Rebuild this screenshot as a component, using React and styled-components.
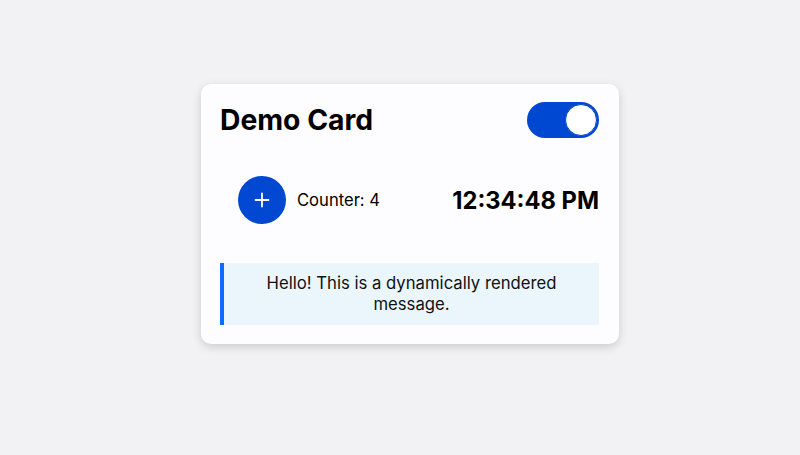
import React, { useState } from 'react';
import styled, { createGlobalStyle } from 'styled-components';

const GlobalStyle = createGlobalStyle`
  html, body {
    margin: 0;
    padding: 0;
    background: #f2f1f4;
    font-family: Inter, "Noto Sans", sans-serif;
  }
`;

const Page = styled.div`
  width: 800px;
  height: 455px;
  display: flex;
  justify-content: center;
  padding: 84px 0 0 20px;
  box-sizing: border-box;
`;

const Card = styled.div`
  width: 418px;
  height: 260px;
  box-sizing: border-box;
  background: #fdfcff;
  border-radius: 10px;
  padding: 18px 20px 19px 19px;
  box-shadow: 0 3px 10px rgba(0, 0, 0, 0.16);
`;

const Header = styled.div`
  display: flex;
  align-items: center;
  justify-content: space-between;
  height: 36px;
`;

const Title = styled.h1`
  margin: 0;
  font-size: 28.3px;
  font-weight: 700;
  color: #000;
`;

const Toggle = styled.button`
  width: 72px;
  height: 36px;
  border-radius: 18px;
  border: none;
  padding: 0 2px;
  background: ${p => (p.$on ? '#0047d1' : '#c7c7cc')};
  display: flex;
  align-items: center;
  justify-content: ${p => (p.$on ? 'flex-end' : 'flex-start')};
  cursor: pointer;
`;

const Knob = styled.span`
  width: 32px;
  height: 32px;
  box-sizing: border-box;
  border-radius: 50%;
  background: #fff;
  border: 1.5px solid #0047d1;
`;

const Row = styled.div`
  display: flex;
  align-items: center;
  justify-content: space-between;
  margin-top: 22px;
  padding: 16px 0 16px 18px;
`;

const CounterGroup = styled.div`
  display: flex;
  align-items: center;
  gap: 11px;
`;

const AddButton = styled.button`
  width: 48px;
  height: 48px;
  border-radius: 50%;
  border: none;
  background: #0047d1;
  color: #fff;
  display: flex;
  align-items: center;
  justify-content: center;
  cursor: pointer;
  padding: 0;
`;

const CounterLabel = styled.span`
  font-size: 16.6px;
  color: #000;
`;

const Clock = styled.span`
  font-size: 23.7px;
  font-weight: 700;
  color: #000;
`;

const Message = styled.div`
  margin-top: 23px;
  background: #eaf5fc;
  border-left: 4px solid #0a6cff;
  padding: 10px 16px;
  text-align: center;
  font-size: 16.7px;
  line-height: 21px;
  color: #111;
`;

export default function App() {
  const [on, setOn] = useState(true);
  const [count, setCount] = useState(4);

  return (
    <>
      <GlobalStyle />
      <Page>
        <Card>
          <Header>
            <Title>Demo Card</Title>
            <Toggle $on={on} onClick={() => setOn(!on)}>
              <Knob />
            </Toggle>
          </Header>
          <Row>
            <CounterGroup>
              <AddButton onClick={() => setCount(count + 1)}>
                <svg width="16" height="16" viewBox="0 0 16 16">
                  <path d="M8 1.5v13M1.5 8h13" stroke="#fff" strokeWidth="1.8" strokeLinecap="round" />
                </svg>
              </AddButton>
              <CounterLabel>Counter: {count}</CounterLabel>
            </CounterGroup>
            <Clock>12:34:48 PM</Clock>
          </Row>
          <Message>Hello! This is a dynamically rendered message.</Message>
        </Card>
      </Page>
    </>
  );
}
